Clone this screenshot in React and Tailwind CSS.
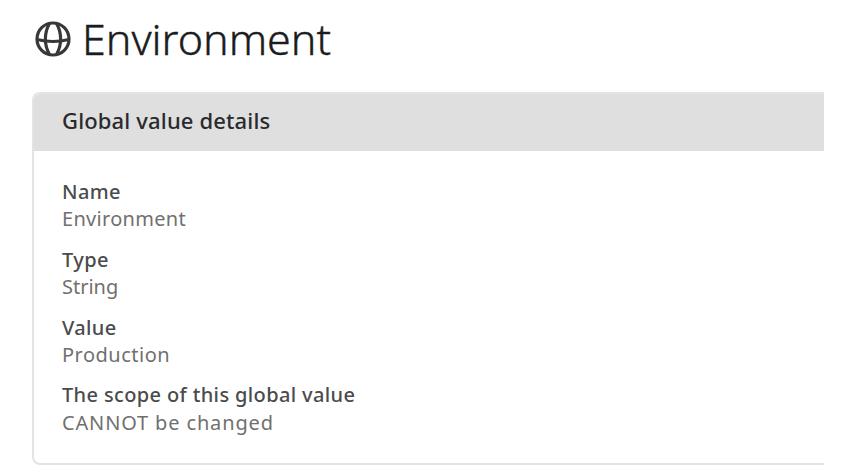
const details = [
  { label: "Name", value: "Environment", spacing: "tracking-[0.3px]" },
  { label: "Type", value: "String", spacing: "tracking-[0px]" },
  { label: "Value", value: "Production", spacing: "tracking-[0.5px]" },
  {
    label: "The scope of this global value",
    value: "CANNOT be changed",
    spacing: "tracking-[0.85px]",
  },
];

export default function App() {
  return (
    <div className="h-[474px] w-full overflow-hidden bg-white pl-8 font-['Noto_Sans',sans-serif]">
      <header className="flex h-[92px] items-start pt-[14px]">
        <GlobeIcon />
        <h1 className="ml-[11px] text-[43px] font-light leading-[50px] text-[#1c1c20] [-webkit-text-stroke:0.4px_#1c1c20]">
          Environment
        </h1>
      </header>

      <section className="h-[373px] w-[792px] overflow-hidden rounded-l-lg border-2 border-r-0 border-[#e4e4e4]">
        <h2 className="flex h-[57px] items-center bg-[#dfdfdf] pb-1 pl-7 text-[22px] font-medium tracking-[0.15px] text-[#2a2a2e]">
          Global value details
        </h2>
        <dl className="flex flex-col gap-[13px] pl-7 pt-[27px]">
          {details.map((item) => (
            <Detail key={item.label} {...item} />
          ))}
        </dl>
      </section>
    </div>
  );
}

function Detail({ label, value, spacing }) {
  return (
    <div className="whitespace-nowrap text-[20px] leading-[27.4px]">
      <dt className="font-medium tracking-[0.37px] text-[#4b4b4d]">{label}</dt>
      <dd className={`text-[#707070] ${spacing}`}>{value}</dd>
    </div>
  );
}

function GlobeIcon() {
  return (
    <svg
      className="ml-[3px] mt-[7px] h-9 w-9 shrink-0"
      viewBox="0 0 36 36"
      fill="none"
      stroke="#38383b"
      strokeWidth="3.2"
    >
      <circle cx="18" cy="18" r="16" />
      <path d="M14.5 2.5C9 12 9 24 14.5 33.5M21.5 2.5c5.5 9.5 5.5 21.5 0 31" />
      <path d="M2 18.5c10 2.5 22 2.5 32 0" />
    </svg>
  );
}
